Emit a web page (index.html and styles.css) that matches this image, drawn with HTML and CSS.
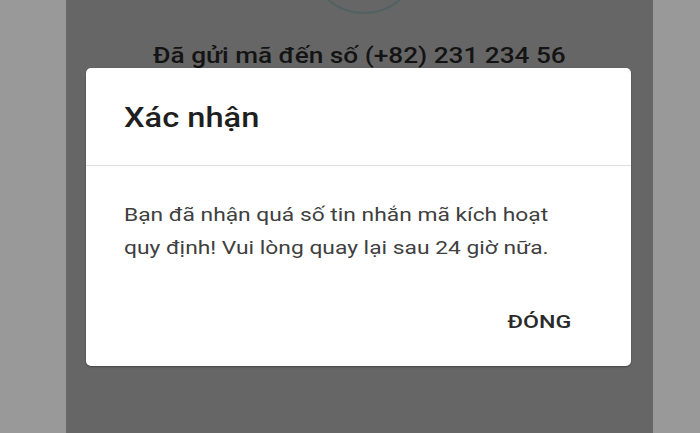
FILE: index.html
```html
<!DOCTYPE html>
<html lang="vi">
<head>
<meta charset="utf-8">
<title>Xác nhận</title>
<link rel="stylesheet" href="styles.css">
</head>
<body>
<div class="screen">
  <div class="phone">
    <div class="avatar-wrap"><div class="avatar"></div></div>
    <p class="sent"><span class="sent-text">Đã gửi mã đến số (+82) 231 234 56</span></p>
    <div class="dialog">
      <div class="dialog-head">
        <h1 class="dialog-title"><span class="title-text">Xác nhận</span></h1>
      </div>
      <div class="dialog-body">
        <p class="dialog-msg">Bạn đã nhận quá số tin nhắn mã kích hoạt quy định! Vui lòng quay lại sau 24 giờ nữa.</p>
        <div class="dialog-actions">
          <button class="btn-close">ĐÓNG</button>
        </div>
      </div>
    </div>
  </div>
</div>
</body>
</html>
```
FILE: styles.css
```css
* { box-sizing: border-box; }
html, body {
  margin: 0;
  padding: 0;
  width: 700px;
  height: 433px;
  overflow: hidden;
  background: #999999;
  font-family: Roboto, "Noto Sans", sans-serif;
}
.screen {
  display: flex;
  padding-left: 66px;
  height: 433px;
}
.phone {
  position: relative;
  width: 587px;
  height: 433px;
  background: #666666;
  overflow: hidden;
}
.avatar-wrap {
  display: flex;
  justify-content: center;
  height: 14px;
  padding-left: 8px;
}
.avatar {
  flex: none;
  width: 112px;
  height: 112px;
  margin-top: -98px;
  border-radius: 50%;
  border: 2px solid #526262;
}
.sent {
  margin: 29px 0 0;
  text-align: center;
  font-size: 22px;
  line-height: 26px;
  font-weight: 500;
  color: #141414;
}
.sent-text {
  display: inline-block;
  transform: scaleX(1.19);
  transform-origin: center;
}
.dialog {
  position: absolute;
  left: 20px;
  top: 68px;
  width: 545px;
  height: 298px;
  background: #ffffff;
  border-radius: 5px;
  box-shadow: 0 1px 2px rgba(0,0,0,0.35);
}
.dialog-head {
  padding: 32px 38px 30px;
  border-bottom: 1px solid #dedfe6;
}
.dialog-title {
  margin: 0;
  font-size: 28px;
  line-height: 35px;
  font-weight: 500;
  color: #1f1f1f;
}
.title-text {
  display: inline-block;
  transform: scaleX(1.165);
  transform-origin: left center;
}
.dialog-body {
  padding: 32px 38px 0;
}
.dialog-msg {
  margin: 0;
  width: 360px;
  font-size: 19px;
  line-height: 33px;
  color: #404040;
  transform: scaleX(1.2);
  transform-origin: left top;
}
.dialog-actions {
  display: flex;
  justify-content: flex-end;
  margin-top: 46px;
  padding-right: 22px;
}
.btn-close {
  border: none;
  background: none;
  padding: 0;
  font-family: Roboto, "Noto Sans", sans-serif;
  font-size: 19px;
  line-height: 24px;
  font-weight: 500;
  color: #2a2a2a;
  transform: scaleX(1.22);
  transform-origin: right center;
}
```
